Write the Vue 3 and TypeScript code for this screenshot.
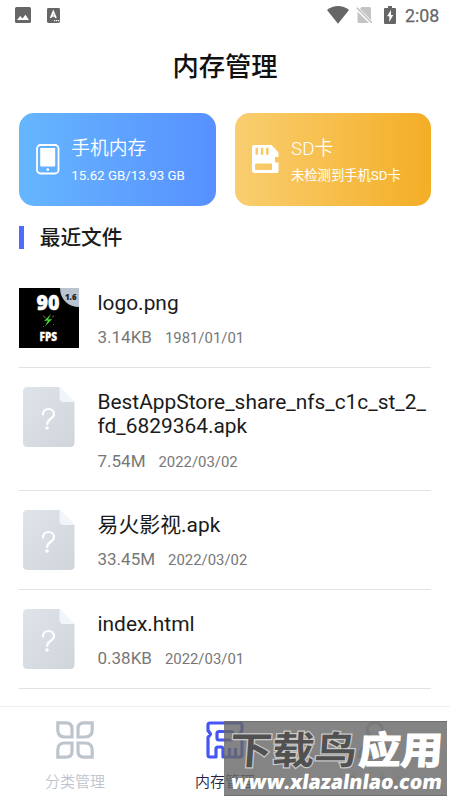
<script setup lang="ts">
interface FileItem {
  lines: string[]
  size: string
  date: string
  thumb?: boolean
}

const files: FileItem[] = [
  { lines: ['logo.png'], size: '3.14KB', date: '1981/01/01', thumb: true },
  { lines: ['BestAppStore_share_nfs_c1c_st_2_', 'fd_6829364.apk'], size: '7.54M', date: '2022/03/02' },
  { lines: ['易火影视.apk'], size: '33.45M', date: '2022/03/02' },
  { lines: ['index.html'], size: '0.38KB', date: '2022/03/01' },
]
</script>

<template>
  <div class="screen">
    <header class="status">
      <svg class="st-pic" width="16" height="16" viewBox="0 0 16 16">
        <rect width="16" height="16" rx="1.6" fill="#666" />
        <path d="M2 13 5.2 9l2.2 2.4L10.5 7.8 14 13z" fill="#fff" />
      </svg>
      <svg class="st-a" width="13" height="15" viewBox="0 0 13 15">
        <rect width="13" height="15" rx="1.4" fill="#666" />
        <path d="M3.6 10 6.3 3.6 9 10M4.6 8h3.6" fill="none" stroke="#fff" stroke-width="1.7" />
        <path d="M7 12.6h1.3M9 12.6h1.3M11 12.6h1.3" stroke="#fff" stroke-width="1.3" />
      </svg>
      <span class="grow"></span>
      <svg class="st-wifi" width="22" height="18" viewBox="0 0 22 18">
        <path d="M0 4.1C6.5-1.3 15.5-1.3 22 4.1L11 17.8z" fill="#666" />
      </svg>
      <svg class="st-sim" width="17" height="18" viewBox="0 0 17 18">
        <path d="M5.5 1H13.500q1.500 0 1.500 1.500V14L4 3zM1.500 5.500 13 17H3q-1.500 0-1.500-1.500z" fill="#c4c4c4" />
        <path d="M.8 1.800 15.800 16.800" stroke="#bbb" stroke-width="1.300" />
      </svg>
      <svg class="st-bat" width="12" height="18" viewBox="0 0 12 18">
        <path d="M4 0h4v2h3q1 0 1 1v14q0 1-1 1H1q-1 0-1-1V3q0-1 1-1h3z" fill="#666" />
        <path d="M7 4 3 10.300h2.300V16L9.200 9H7z" fill="#fff" />
      </svg>
      <span class="clock">2:08</span>
    </header>

    <h1 class="title">内存管理</h1>

    <section class="cards">
      <div class="card blue">
        <svg class="c-phone" width="24" height="31" viewBox="0 0 24 31">
          <rect x="1" y="1" width="21.500" height="28.500" rx="3.500" fill="none" stroke="#fff" stroke-width="1.800" />
          <path d="M4.200 4h15v17.500q0 1-1 1h-13q-1 0-1-1z" fill="#fff" />
          <circle cx="11.800" cy="25.600" r="1.300" fill="#fff" />
        </svg>
        <div class="c-text">
          <div class="c-name">手机内存</div>
          <div class="c-info">15.62 GB/13.93 GB</div>
        </div>
      </div>
      <div class="card gold">
        <svg class="c-sd" width="27" height="29" viewBox="0 0 27 29">
          <path fill="#fff" fill-rule="evenodd" d="M2 0H19.500L26.500 7.500V12H23V17.500H26.500V26.500q0 1.500-1.500 1.500H2q-2 0-2-2V2q0-2 2-2zM3.500 2.800v7h2.500v-7zM8.800 2.800v7h2.500v-7zM14 2.800v7h2.500v-7zM4 18.500q-1 0-1 1V24q0 1 1 1H19q1 0 1-1V19.500q0-1-1-1z" />
        </svg>
        <div class="c-text">
          <div class="c-name">SD卡</div>
          <div class="c-info">未检测到手机SD卡</div>
        </div>
      </div>
    </section>

    <h2 class="recent">最近文件</h2>

    <main class="list">
      <article v-for="f in files" :key="f.lines[0]" class="row">
        <div class="icon">
          <svg v-if="f.thumb" width="60" height="60" viewBox="0 0 60 60">
            <rect width="60" height="60" fill="#000" />
            <path d="M41 0H60V19C50 19 41 12 41 0z" fill="#b9c4d0" />
            <text class="fps" x="17.500" y="21.500" font-size="21" textLength="23" lengthAdjust="spacingAndGlyphs" fill="#fff" stroke="#fff" stroke-width=".5">90</text>
            <text class="fps" x="46" y="12" font-size="9" textLength="11.500" lengthAdjust="spacingAndGlyphs" fill="#222">1.6</text>
            <path d="m32 26-7 7 4-.5-3 6 7-7.500-4 .5z" fill="#45e52f" />
            <path d="m24 28 3 2M35 28l-2 1M25 38l-1 1M34 36l1 1" stroke="#8a611f" />
            <text class="fps" x="20.500" y="53" font-size="11.500" textLength="17.500" lengthAdjust="spacingAndGlyphs" fill="#fff" stroke="#fff" stroke-width=".3">FPS</text>
          </svg>
          <svg v-else class="doc" width="52" height="60" viewBox="0 0 52 60">
            <defs>
              <linearGradient id="paper" x1="0" y1="0" x2="1" y2="1">
                <stop offset="0" stop-color="#dee4e9" />
                <stop offset="1" stop-color="#cfd5db" />
              </linearGradient>
            </defs>
            <path d="M4.500 0H36.500L51.500 15V55.500q0 4.500-4.500 4.500H4.500Q0 60 0 55.500V4.500Q0 0 4.500 0z" fill="url(#paper)" />
            <path d="M36.500 0 51.500 15H41q-4.500 0-4.500-4.500z" fill="#f1f6fa" />
            <path d="M20 27.500c0-7.500 11-7 11-.5 0 5-6.800 4.500-6.800 10" fill="none" stroke="#fff" stroke-width="2.200" stroke-linecap="round" />
            <circle cx="24" cy="41" r="1.800" fill="#fff" />
          </svg>
        </div>
        <div class="meta">
          <div v-for="l in f.lines" :key="l" class="name">{{ l }}</div>
          <div class="sub"><span class="size">{{ f.size }}</span><span class="date">{{ f.date }}</span></div>
        </div>
      </article>
    </main>

    <nav class="tabs">
      <div class="tab">
        <svg width="38" height="38" viewBox="0 0 38 38" fill="none" stroke="#bec4ce" stroke-width="3.200">
          <path d="M1.800 1.800H10q6 0 6 6V16H9q-7.200 0-7.200-7z" />
          <path d="M36.200 1.800H28q-6 0-6 6V16h7q7.200 0 7.200-7z" />
          <path d="M1.800 36.200V29q0-7 7.200-7H16v8.200q0 6-6 6z" />
          <path d="M36.200 36.200V29q0-7-7.200-7H22v8.200q0 6 6 6z" />
        </svg>
        <span>分类管理</span>
      </div>
      <div class="tab active">
        <svg width="38" height="38" viewBox="0 0 38 38" fill="none" stroke="#4655f5" stroke-width="3.200" stroke-linejoin="round">
          <path d="M4 2H34q2 0 2 2V9.500L33.500 13 36 16.500V34q0 2-2 2H17V28q0-2-2-2H12q-2 0-2 2V36H4q-2 0-2-2V16.500L4.500 13 2 9.500V4q0-2 2-2z" />
          <path d="M23.500 27V36M29.500 27V36" />
          <rect x="11" y="10.500" width="16" height="8.500" rx="2" />
        </svg>
        <span>内存管理</span>
      </div>
      <div class="tab">
        <svg width="38" height="38" viewBox="0 0 38 38" fill="none" stroke="#bec4ce" stroke-width="3">
          <circle cx="19" cy="9" r="7.500" />
          <path d="M3 36c0-18 32-18 32 0z" />
        </svg>
        <span>个人中心</span>
      </div>
    </nav>

    <svg class="mark" width="223" height="75" viewBox="0 0 223 75">
      <rect width="223" height="75" fill="#696969" fill-opacity=".82" />
      <path d="M0 .5H223M0 74.500H223" stroke="#707070" />
      <g class="mark-cn" transform="translate(1 43) skewX(-4)">
        <text x="4" y="0" font-size="38" textLength="127" lengthAdjust="spacingAndGlyphs" fill="#515151" stroke="#c9c9c9" stroke-width="2.400">下载鸟</text>
        <text x="133" y="0" font-size="38" textLength="84" lengthAdjust="spacingAndGlyphs" fill="#fff" stroke="#fff" stroke-width="1.400">应用</text>
      </g>
      <g transform="translate(6 68) skewX(-8)">
        <text class="mark-url" x="0" y="0" font-size="20" textLength="211" lengthAdjust="spacingAndGlyphs" fill="#fff">www.xlazalnlao.com</text>
      </g>
    </svg>
  </div>
</template>

<style>
body {
  background: #fff;
}
</style>

<style scoped>
.screen {
  position: relative;
  width: 450px;
  height: 800px;
  overflow: hidden;
  box-sizing: border-box;
  display: flex;
  flex-direction: column;
  background: #fff;
  font-family: Roboto, "Noto Sans CJK SC", sans-serif;
}
svg {
  display: block;
  flex: none;
}
.status {
  height: 30px;
  padding: 0 10px 0 14.500px;
  display: flex;
  align-items: center;
}
.st-a {
  margin-left: 16px;
}
.grow {
  flex: 1;
}
.st-sim {
  margin-left: 7px;
}
.st-bat {
  margin-left: 11px;
}
.clock {
  width: 35px;
  margin-left: 9px;
  padding-top: 2px;
  font-size: 17.800px;
  line-height: 28px;
  font-weight: 400;
  -webkit-text-stroke: 0.25px #686868;
  color: #686868;
}
.title {
  margin: 0;
  height: 82.500px;
  line-height: 74px;
  font-size: 26.300px;
  font-weight: 500;
  text-align: center;
  color: #111;
}
.cards {
  display: flex;
  gap: 19px;
  padding: 0 18.700px;
}
.card {
  flex: 1;
  height: 93.700px;
  box-sizing: border-box;
  border-radius: 15px;
  display: flex;
  align-items: center;
  color: #fff;
}
.blue {
  padding-left: 17px;
  background: linear-gradient(90deg, #66b6ff, #5790ff);
}
.gold {
  padding-left: 17px;
  background: linear-gradient(90deg, #f9ce70, #f4ae26);
}
.c-phone {
  margin-right: 11.500px;
}
.c-sd {
  margin-right: 12.500px;
}
.c-text {
  padding-top: 2px;
}
.c-name {
  font-size: 18.800px;
  line-height: 28px;
  font-weight: 350;
}
.c-info {
  font-size: 13.300px;
  line-height: 20px;
  margin-top: 3.500px;
  white-space: nowrap;
}
.recent {
  margin: 20.100px 0 0 18.700px;
  padding-left: 16px;
  border-left: 5px solid #4d6bfd;
  height: 22.300px;
  line-height: 25.500px;
  font-size: 20.700px;
  font-weight: 500;
  color: #1b1b1b;
}
.list {
  margin: 20.200px 18.700px 0;
}
.row {
  display: flex;
  padding: 19px 0 19.300px;
  border-bottom: 1px solid #e2e2e2;
}
.row + .row {
  padding: 18.900px 0 19.100px;
}
.icon {
  width: 78.800px;
  flex: none;
}
.doc {
  margin-left: 4.300px;
}
.fps {
  font-family: "Open Sans", sans-serif;
  font-weight: 800;
}
.meta {
  padding-top: 2.800px;
}
.name {
  font-size: 20.900px;
  line-height: 24.500px;
  height: 24.500px;
  color: #1b1b1b;
  white-space: nowrap;
}
.sub {
  display: flex;
  align-items: baseline;
  margin-top: 11.800px;
  height: 20.400px;
  line-height: 21px;
  color: #777;
}
.size {
  font-size: 17px;
}
.date {
  margin-left: 13px;
  font-size: 14.900px;
}
.tabs {
  position: absolute;
  left: 0;
  right: 0;
  bottom: 0;
  height: 94px;
  box-sizing: border-box;
  padding-top: 14px;
  border-top: 1px solid #eee;
  display: flex;
  background: #fff;
}
.tab {
  flex: 1;
  display: flex;
  flex-direction: column;
  align-items: center;
  color: #bec4ce;
  font-size: 15px;
  font-weight: 350;
  line-height: 22px;
}
.tab span {
  margin-top: 12px;
}
.active {
  color: #25253d;
}
.mark {
  position: absolute;
  left: 224px;
  top: 721px;
  overflow: visible;
}
.mark-cn {
  font-family: "Noto Sans CJK SC", sans-serif;
  font-weight: 700;
  paint-order: stroke;
}
.mark-url {
  font-family: "Open Sans", sans-serif;
  font-weight: 800;
}
</style>
